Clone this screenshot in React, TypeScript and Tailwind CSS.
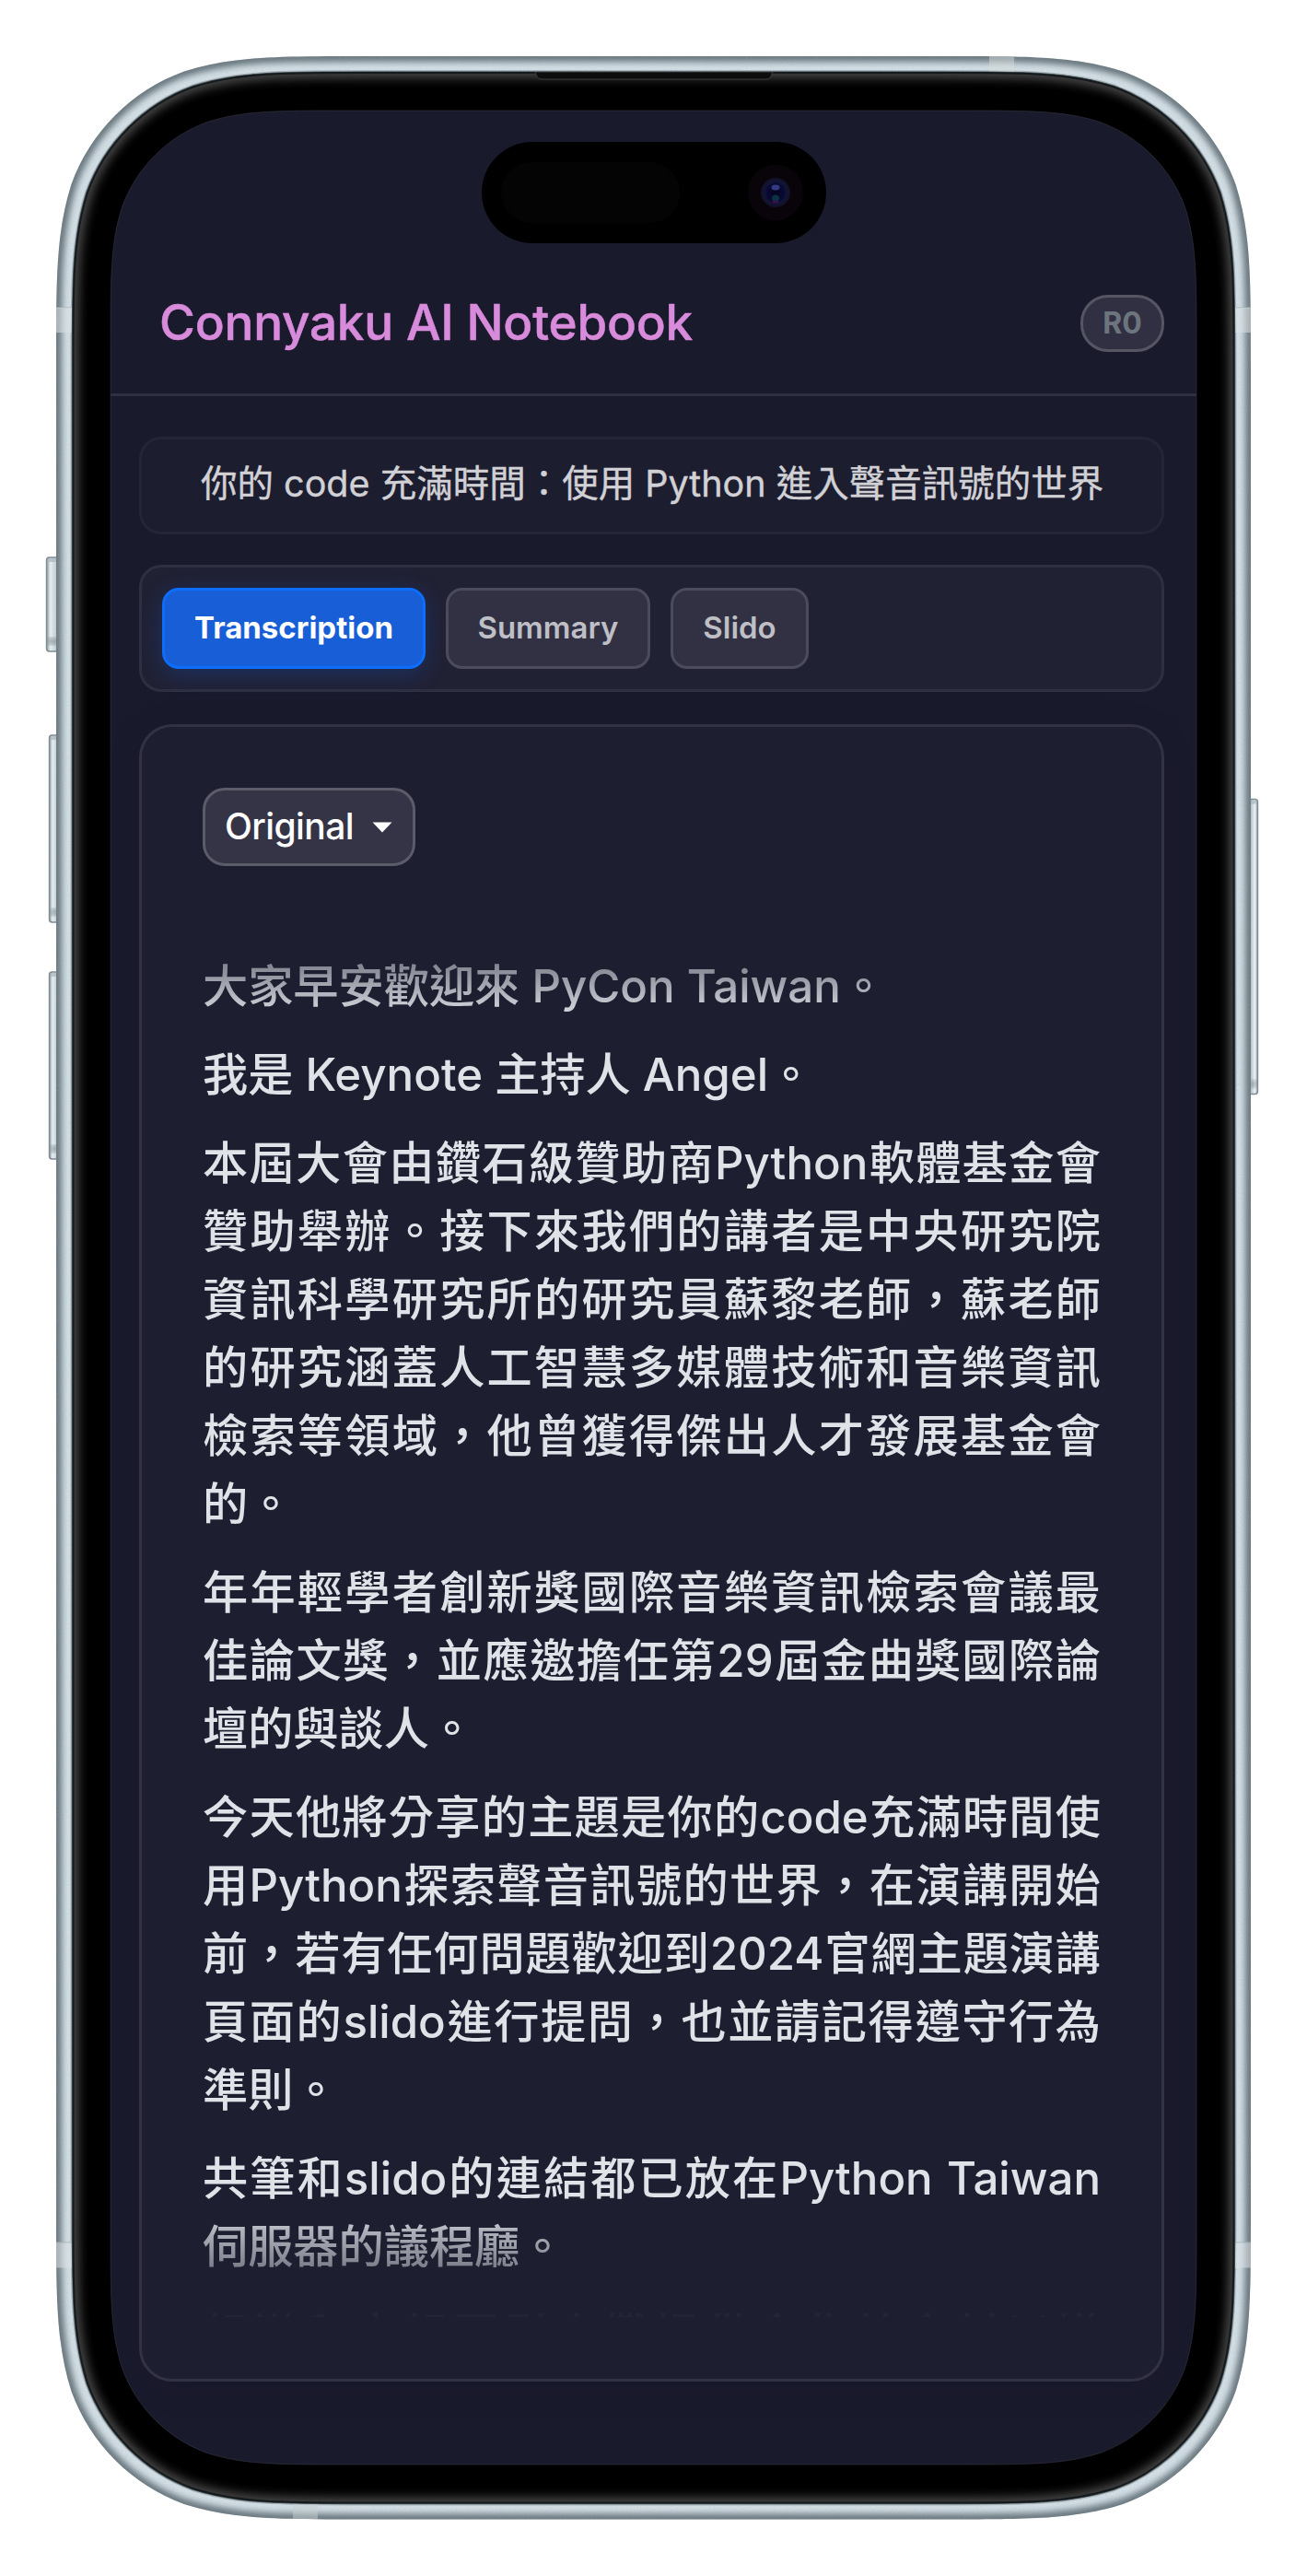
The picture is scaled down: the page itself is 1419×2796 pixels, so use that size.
import React from "react";

const SANS = "font-['Inter','Noto_Sans_CJK_TC',sans-serif]";

/** Outline of a rectangle with continuous (squircle-like) corners. */
function smoothRect(x: number, y: number, w: number, h: number, r: number) {
  const R = x + w;
  const B = y + h;
  const p = (px: number, py: number) => `${px.toFixed(2)} ${py.toFixed(2)}`;
  const a = 1.52866 * r, b = 1.08849 * r, c = 0.86841 * r;
  const d = 0.63149 * r, e = 0.07491 * r, f = 0.37282 * r, g = 0.16906 * r;
  return [
    `M${p(x + a, y)}`,
    `L${p(R - a, y)}`,
    `C${p(R - b, y)} ${p(R - c, y)} ${p(R - d, y + e)}`,
    `C${p(R - f, y + g)} ${p(R - g, y + f)} ${p(R - e, y + d)}`,
    `C${p(R, y + c)} ${p(R, y + b)} ${p(R, y + a)}`,
    `L${p(R, B - a)}`,
    `C${p(R, B - b)} ${p(R, B - c)} ${p(R - e, B - d)}`,
    `C${p(R - g, B - f)} ${p(R - f, B - g)} ${p(R - d, B - e)}`,
    `C${p(R - c, B)} ${p(R - b, B)} ${p(R - a, B)}`,
    `L${p(x + a, B)}`,
    `C${p(x + b, B)} ${p(x + c, B)} ${p(x + d, B - e)}`,
    `C${p(x + f, B - g)} ${p(x + g, B - f)} ${p(x + e, B - d)}`,
    `C${p(x, B - c)} ${p(x, B - b)} ${p(x, B - a)}`,
    `L${p(x, y + a)}`,
    `C${p(x, y + b)} ${p(x, y + c)} ${p(x + e, y + d)}`,
    `C${p(x + g, y + f)} ${p(x + f, y + g)} ${p(x + d, y + e)}`,
    `C${p(x + c, y)} ${p(x + b, y)} ${p(x + a, y)}`,
    "Z",
  ].join("");
}

const BODY = smoothRect(61, 61, 1297, 2673.5, 220);
const GLASS = smoothRect(78.5, 78, 1262, 2639.5, 207);
const SCREEN = smoothRect(120, 120, 1179, 2555, 166);

function SideButton({ x, y, w, h, flip }: { x: number; y: number; w: number; h: number; flip?: boolean }) {
  return (
    <g>
      <rect x={x} y={y} width={w + 6} height={h} rx="3" fill={flip ? "url(#btnR)" : "url(#btnL)"} stroke="#7f8b92" strokeWidth="1.4" />
      <rect x={x + 1} y={y + h - 15} width={w + 4} height="8" fill="#7c898f" opacity="0.55" filter="url(#soft2)" />
      <rect x={x + 1} y={y + 1} width={w + 4} height="4" fill="#a9b6bc" opacity="0.7" />
    </g>
  );
}

function PhoneBody() {
  return (
    <svg className="absolute inset-0" width="1419" height="2796" viewBox="0 0 1419 2796" aria-hidden="true">
      <defs>
        <linearGradient id="btnL" x1="0" x2="1" y1="0" y2="0">
          <stop offset="0" stopColor="#8e9aa1" />
          <stop offset="0.25" stopColor="#e4edf0" />
          <stop offset="0.6" stopColor="#c3ced3" />
          <stop offset="1" stopColor="#95a1a8" />
        </linearGradient>
        <linearGradient id="btnR" x1="1" x2="0" y1="0" y2="0">
          <stop offset="0" stopColor="#8e9aa1" />
          <stop offset="0.2" stopColor="#eaf3f6" />
          <stop offset="0.6" stopColor="#a9b5bb" />
          <stop offset="1" stopColor="#95a1a8" />
        </linearGradient>
        <filter id="soft2"><feGaussianBlur stdDeviation="2" /></filter>
        <filter id="soft3" x="-5%" y="-5%" width="110%" height="110%"><feGaussianBlur stdDeviation="3.6" /></filter>
        <filter id="soft6" x="-5%" y="-5%" width="110%" height="110%"><feGaussianBlur stdDeviation="6" /></filter>
        <filter id="grain" x="0" y="0" width="100%" height="100%">
          <feTurbulence type="fractalNoise" baseFrequency="0.6" numOctaves="2" seed="4" />
          <feColorMatrix values="0 0 0 0 0.35  0 0 0 0 0.42  0 0 0 0 0.47  0 0 0 1.6 -0.72" />
        </filter>
        <clipPath id="glassClip"><path d={GLASS} /></clipPath>
        <clipPath id="ringClip"><path d={BODY + GLASS} clipRule="evenodd" /></clipPath>
        <radialGradient id="lens" cx="0.5" cy="0.5" r="0.5">
          <stop offset="0" stopColor="#04041c" />
          <stop offset="0.6" stopColor="#080a36" />
          <stop offset="0.75" stopColor="#131434" />
          <stop offset="1" stopColor="#111126" />
        </radialGradient>
      </defs>

      <SideButton x={50.5} y={605} w={11} h={102} />
      <SideButton x={53.5} y={798} w={8} h={203} />
      <SideButton x={53.5} y={1055} w={8} h={203} />
      <SideButton x={1351} y={867.5} w={8.5} h={320} flip />

      <path d={BODY} fill="#d3dfe5" />
      <g clipPath="url(#ringClip)">
        <path d={BODY} fill="none" stroke="#66737a" strokeWidth="12" filter="url(#soft3)" />
        <rect x="61" y="61" width="1297" height="2674" filter="url(#grain)" opacity="0.3" />
        <path d={GLASS} fill="none" stroke="#8d9aa0" strokeWidth="4" opacity="0.6" />
        <path d="M61 334H79M1340 334H1358M61 2434H79M1340 2434H1358" stroke="#a9b5ba" strokeWidth="1" />
        <rect x="61" y="334" width="18" height="27" fill="#dbe2e3" opacity="0.55" />
        <rect x="1340" y="334" width="18" height="27" fill="#dbe2e3" opacity="0.55" />
        <rect x="61" y="2434.5" width="18" height="27" fill="#dbe2e3" opacity="0.55" />
        <rect x="1340" y="2434.5" width="18" height="27" fill="#dbe2e3" opacity="0.55" />
        <rect x="1074" y="61" width="27" height="18" fill="#d3dbdc" opacity="0.5" />
        <rect x="318" y="2717" width="27" height="18" fill="#c5cfd1" opacity="0.5" />
      </g>
      <path d={GLASS} fill="#000" stroke="#4d5a60" strokeWidth="1.6" />
      <g clipPath="url(#glassClip)">
        <path d={GLASS} fill="none" stroke="#585858" strokeWidth="11" filter="url(#soft6)" />
        <path d={GLASS} fill="none" stroke="#151a1c" strokeWidth="4" />
        <path d="M581 78L583 83Q584 86 588 86H832Q836 86 837 83L839 78Z" fill="#0d0d0d" stroke="#3c3c3c" strokeWidth="1" />
      </g>
      <path d={SCREEN} fill="#1a1a2d" stroke="#3f3f4a" strokeWidth="0.5" />

      <rect x="523" y="154" width="374" height="110" rx="55" fill="#000" />
      <rect x="544" y="176" width="194" height="66" rx="33" fill="#040404" />
      <ellipse cx="842" cy="209" rx="30" ry="30.5" fill="#080409" />
      <circle cx="842" cy="209" r="16" fill="url(#lens)" />
      <ellipse cx="842" cy="203.500" rx="4.500" ry="3" fill="#343a80" />
      <ellipse cx="842" cy="215" rx="4" ry="3.500" fill="#0c3242" />
      <ellipse cx="842" cy="219" rx="3.500" ry="1.500" fill="#3c1050" />
    </svg>
  );
}

type Line = { text: string; full?: boolean };
const PARAGRAPHS: Line[][] = [
  [{ text: "大家早安歡迎來 PyCon Taiwan。" }],
  [{ text: "我是 Keynote 主持人 Angel。" }],
  [
    { text: "本屆大會由鑽石級贊助商Python軟體基金會", full: true },
    { text: "贊助舉辦。接下來我們的講者是中央研究院", full: true },
    { text: "資訊科學研究所的研究員蘇黎老師，蘇老師", full: true },
    { text: "的研究涵蓋人工智慧多媒體技術和音樂資訊", full: true },
    { text: "檢索等領域，他曾獲得傑出人才發展基金會", full: true },
    { text: "的。" },
  ],
  [
    { text: "年年輕學者創新獎國際音樂資訊檢索會議最", full: true },
    { text: "佳論文獎，並應邀擔任第29屆金曲獎國際論", full: true },
    { text: "壇的與談人。" },
  ],
  [
    { text: "今天他將分享的主題是你的code充滿時間使", full: true },
    { text: "用Python探索聲音訊號的世界，在演講開始", full: true },
    { text: "前，若有任何問題歡迎到2024官網主題演講", full: true },
    { text: "頁面的slido進行提問，也並請記得遵守行為", full: true },
    { text: "準則。" },
  ],
  [
    { text: "共筆和slido的連結都已放在Python Taiwan", full: true },
    { text: "伺服器的議程廳。" },
  ],
  [{ text: "報道和文組要引水攤提供食集結食材以議", full: true }],
];

function Transcript() {
  return (
    <div className="mt-[80px] h-[1495px] overflow-hidden text-[49.2px] font-medium leading-[74px] text-[#dfe3e8] [mask-image:linear-gradient(to_bottom,rgba(0,0,0,0.35)_0px,rgba(0,0,0,0.58)_35px,rgba(0,0,0,0.9)_75px,rgba(0,0,0,1)_100px,rgba(0,0,0,1)_1385px,rgba(0,0,0,0.76)_1400px,rgba(0,0,0,0.5)_1440px,rgba(0,0,0,0.03)_1484px,rgba(0,0,0,0.03)_1495px)]">
      <div className="flex flex-col gap-[22px] pt-[13px]">
        {PARAGRAPHS.map((lines, i) => (
          <div key={i}>
            {lines.map((l) => (
              <div
                key={l.text}
                className={
                  l.full
                    ? "h-[74px] whitespace-nowrap [text-align:justify] [text-align-last:justify] [text-justify:inter-character]"
                    : "h-[74px] whitespace-nowrap"
                }
              >
                {l.text}
              </div>
            ))}
          </div>
        ))}
      </div>
    </div>
  );
}

export default function App() {
  return (
    <div className={`relative h-[2796px] w-[1419px] overflow-hidden bg-white ${SANS}`} lang="zh-Hant">
      <PhoneBody />
      <main className="relative ml-[120px] flex w-[1179px] flex-col pt-[275px]">
        <header className="flex h-[155px] items-center justify-between border-b-[3px] border-[#302f41] pl-[53px] pr-[35px]">
          <h1 className="whitespace-nowrap pb-[2px] text-[53px] font-medium leading-none tracking-[-0.2px] text-[#d88bdb] [-webkit-text-stroke:0.5px_#d88bdb]">
            Connyaku AI Notebook
          </h1>
          <span className="flex h-[62px] w-[91px] items-center justify-center rounded-[30px] border-[3px] border-[#565563] bg-[#313042] text-[32px] font-bold leading-none text-[#6c757d]">
            R0
          </span>
        </header>

        <div className="ml-[31px] mt-[44px] flex w-[1113px] flex-col">
          <div className="flex h-[106px] items-center whitespace-nowrap rounded-[24px] border-[3px] border-[#252537] bg-[#1d1d30] pb-[3px] pl-[64px] text-[39.5px] text-[#d1d1d5] [-webkit-text-stroke:0.4px_#d1d1d5]">
            你的 code 充滿時間：使用 Python 進入聲音訊號的世界
          </div>

          <nav className="mt-[33px] flex h-[138px] gap-[22px] rounded-[24px] border-[3px] border-[#2f2f41] bg-[#212134] px-[22px] pt-[22px] text-[33px] font-semibold">
            <button className="h-[88px] w-[286px] rounded-[18px] border-[3px] border-[#0d6efd] bg-[#185ed6] font-bold text-white shadow-[0_6px_24px_rgba(13,110,253,0.22)]">
              Transcription
            </button>
            <button className="h-[88px] w-[222px] rounded-[18px] border-[3px] border-[#4c4b5b] bg-[#313143] text-[#bfbfc6]">Summary</button>
            <button className="h-[88px] w-[150px] rounded-[18px] border-[3px] border-[#4c4b5b] bg-[#313143] text-[#bfbfc6]">Slido</button>
          </nav>

          <section className="mt-[35px] h-[1799px] rounded-[36px] border-[3px] border-[#333244] bg-[#1e1e31] px-[66px] pt-[66px] shadow-[0_6px_40px_rgba(0,0,0,0.08)]">
            <button className="flex h-[85px] w-[231px] items-center justify-between rounded-[24px] border-[3px] border-[#5c5b6a] bg-[#353447] pl-[21px] pr-[22px] text-[39px] font-[450] tracking-[-0.6px] text-white">
              <span>Original</span>
              <svg width="22" height="12" viewBox="0 0 22 12" aria-hidden="true">
                <path d="M0.500 0.500H21.500L11 11.500Z" fill="#fff" />
              </svg>
            </button>
            <Transcript />
          </section>
        </div>
      </main>
    </div>
  );
}
